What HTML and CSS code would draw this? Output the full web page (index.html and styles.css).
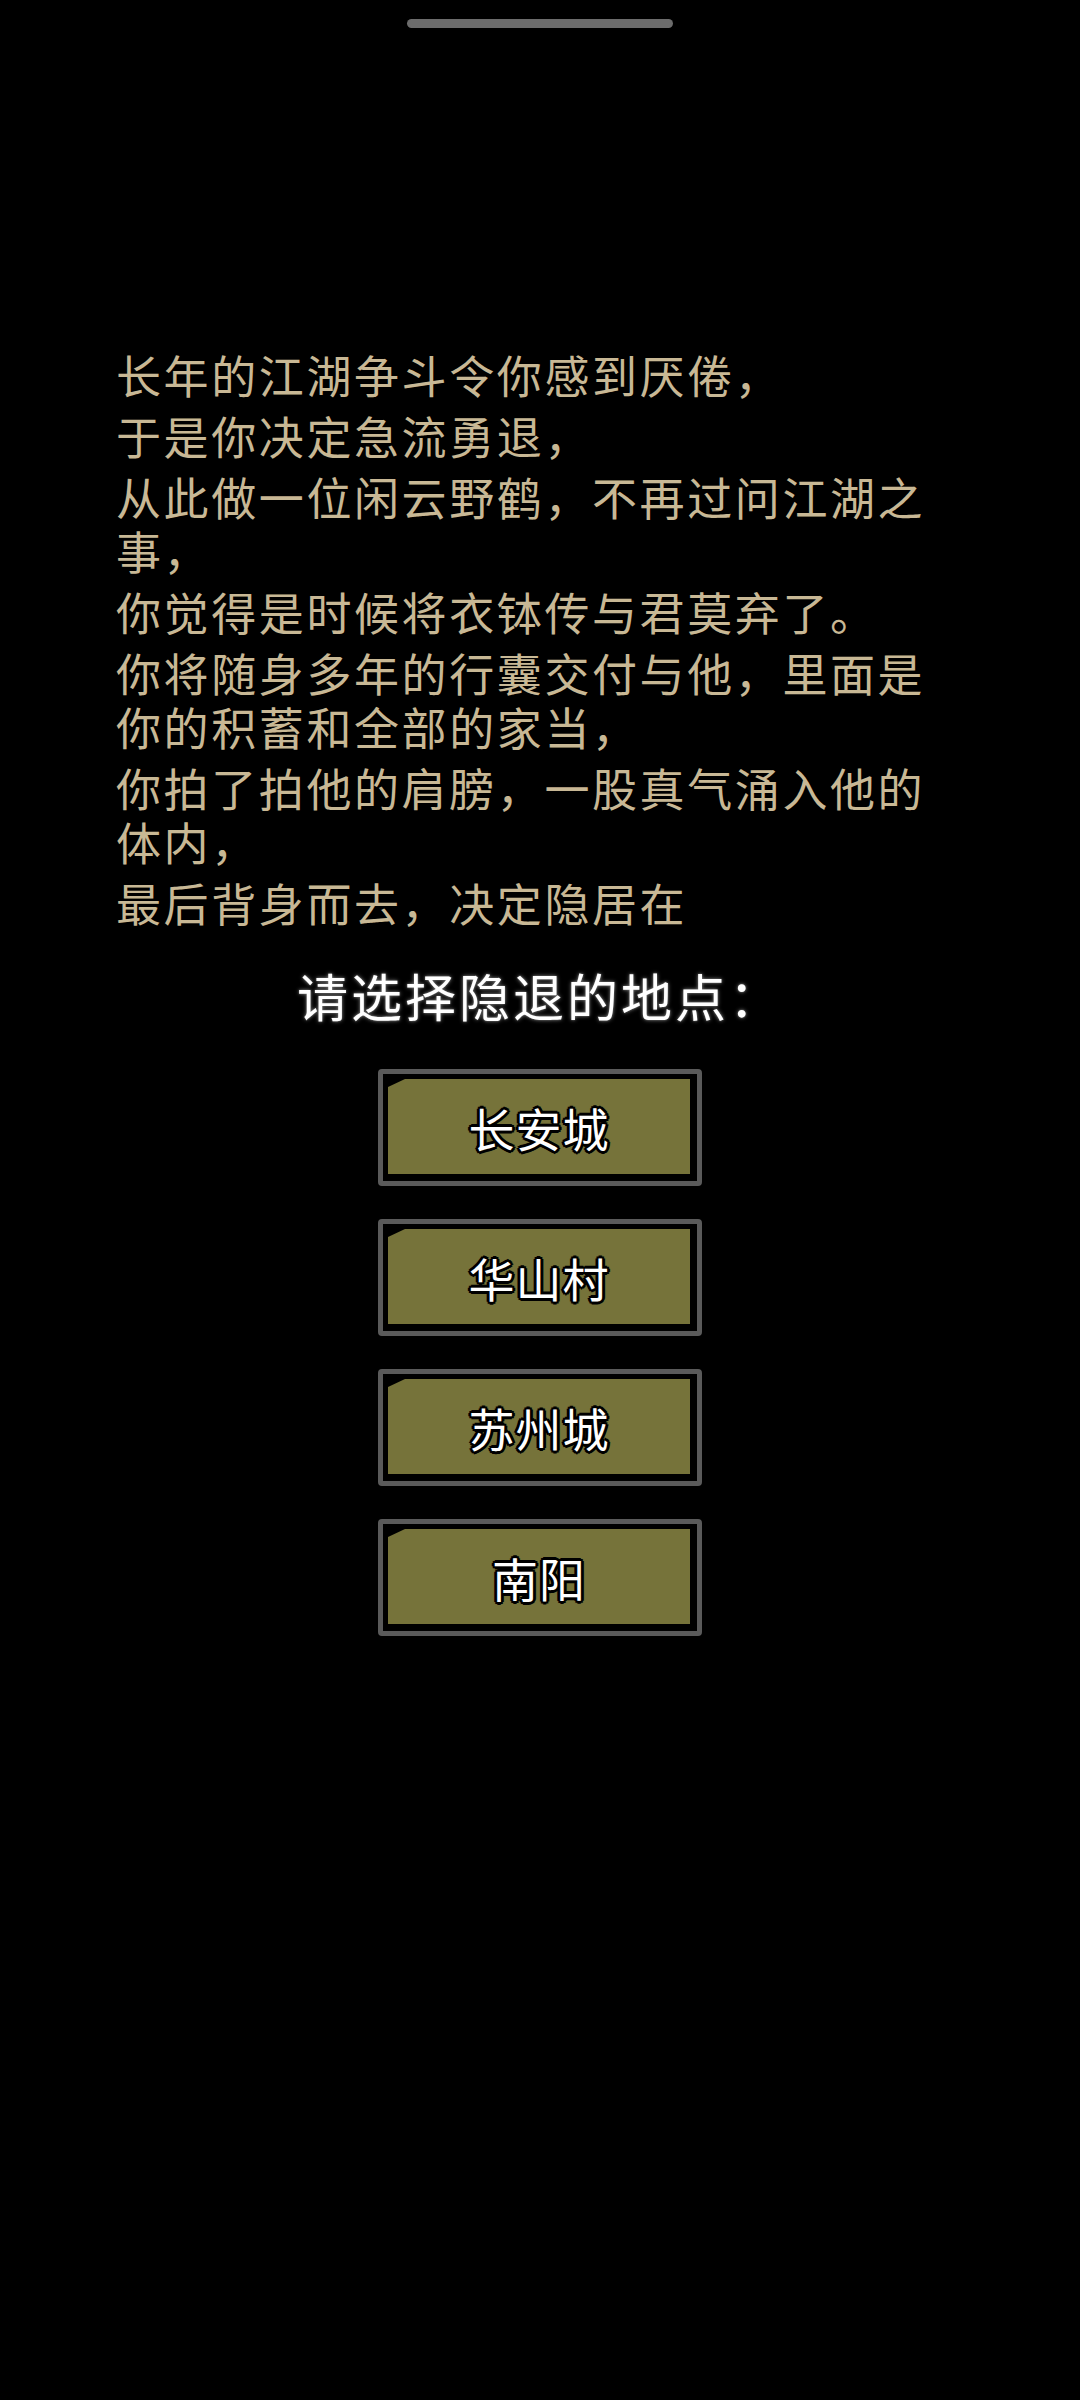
FILE: index.html
```html
<!DOCTYPE html>
<html lang="zh-CN">
<head>
<meta charset="utf-8">
<title>隐退</title>
<link rel="stylesheet" href="styles.css">
</head>
<body>
<div class="home-bar"></div>
<div class="story">
  <p>长年的江湖争斗令你感到厌倦，</p>
  <p>于是你决定急流勇退，</p>
  <p>从此做一位闲云野鹤，不再过问江湖之事，</p>
  <p>你觉得是时候将衣钵传与君莫弃了。</p>
  <p>你将随身多年的行囊交付与他，里面是你的积蓄和全部的家当，</p>
  <p>你拍了拍他的肩膀，一股真气涌入他的体内，</p>
  <p>最后背身而去，决定隐居在</p>
</div>
<div class="prompt">请选择隐退的地点：</div>
<div class="choices">
  <div class="btn"><div class="btn-fill"><span class="btn-label">长安城</span></div></div>
  <div class="btn"><div class="btn-fill"><span class="btn-label">华山村</span></div></div>
  <div class="btn"><div class="btn-fill"><span class="btn-label">苏州城</span></div></div>
  <div class="btn"><div class="btn-fill"><span class="btn-label">南阳</span></div></div>
</div>
</body>
</html>
```
FILE: styles.css
```css
html, body {
  margin: 0;
  padding: 0;
  background: #000;
}
body {
  width: 1080px;
  min-height: 2400px;
  font-family: "Noto Sans CJK SC", "Noto Sans", sans-serif;
  overflow: hidden;
}
.home-bar {
  width: 266px;
  height: 9px;
  margin: 19px auto 0;
  border-radius: 5px;
  background: #6c6c6c;
}
.story {
  margin: 320px 0 0 116px;
  width: 830px;
  color: #c8b895;
  font-size: 45px;
  line-height: 54px;
  letter-spacing: 2.6px;
}
.story p {
  margin: 0 0 7px 0;
}
.story p:last-child {
  margin-bottom: 0;
}
.prompt {
  margin-top: 35px;
  text-align: center;
  color: #fff;
  font-size: 51px;
  line-height: 60px;
  letter-spacing: 3px;
  text-shadow: 0 0 4px #777, 0 0 2px #666;
}
.choices {
  margin-top: 44px;
  display: flex;
  flex-direction: column;
  align-items: center;
  gap: 33px;
}
.btn {
  box-sizing: border-box;
  width: 324px;
  height: 117px;
  border: 5px solid #5a5a5a;
  border-radius: 4px;
  background: #000;
  padding: 5px 7px 7px 5px;
}
.btn-fill {
  width: 100%;
  height: 100%;
  background: #76733a;
  clip-path: polygon(17px 0, 100% 0, 100% 100%, 0 100%, 0 8px);
  display: flex;
  align-items: center;
  justify-content: center;
}
.btn-label {
  color: #fff;
  font-size: 46px;
  letter-spacing: 1px;
  line-height: 1;
  text-shadow:
    -3px 0 0 #000, 3px 0 0 #000, 0 -3px 0 #000, 0 3px 0 #000,
    -2px -2px 0 #000, 2px -2px 0 #000, -2px 2px 0 #000, 2px 2px 0 #000,
    0 0 3px #000;
}
```
